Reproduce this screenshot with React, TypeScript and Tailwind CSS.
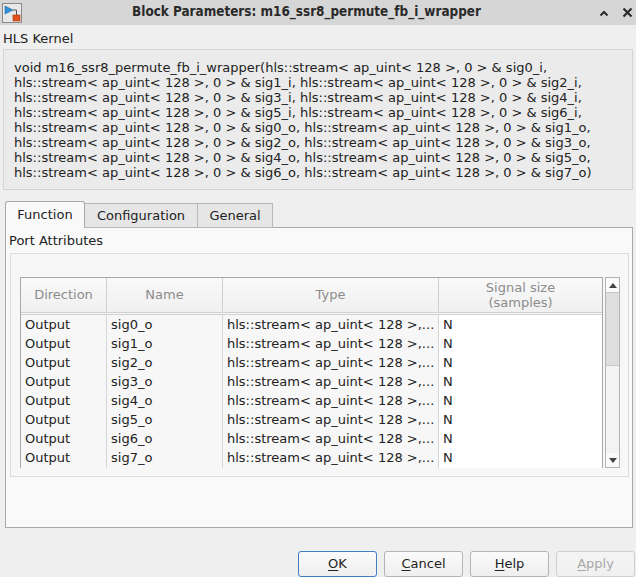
import React from 'react'

const kernelLines = [
  'void m16_ssr8_permute_fb_i_wrapper(hls::stream< ap_uint< 128 >, 0 > & sig0_i,',
  'hls::stream< ap_uint< 128 >, 0 > & sig1_i, hls::stream< ap_uint< 128 >, 0 > & sig2_i,',
  'hls::stream< ap_uint< 128 >, 0 > & sig3_i, hls::stream< ap_uint< 128 >, 0 > & sig4_i,',
  'hls::stream< ap_uint< 128 >, 0 > & sig5_i, hls::stream< ap_uint< 128 >, 0 > & sig6_i,',
  'hls::stream< ap_uint< 128 >, 0 > & sig0_o, hls::stream< ap_uint< 128 >, 0 > & sig1_o,',
  'hls::stream< ap_uint< 128 >, 0 > & sig2_o, hls::stream< ap_uint< 128 >, 0 > & sig3_o,',
  'hls::stream< ap_uint< 128 >, 0 > & sig4_o, hls::stream< ap_uint< 128 >, 0 > & sig5_o,',
  'hls::stream< ap_uint< 128 >, 0 > & sig6_o, hls::stream< ap_uint< 128 >, 0 > & sig7_o)',
]

const ports = ['sig0_o', 'sig1_o', 'sig2_o', 'sig3_o', 'sig4_o', 'sig5_o', 'sig6_o', 'sig7_o']

function BlockIcon() {
  return (
    <svg width="20" height="20" viewBox="0 0 20 20">
      <rect x="0.5" y="0.5" width="19" height="19" fill="#e8e8e8" stroke="#8a8a8a" />
      <path d="M3 3 L11 7 L3 11 Z" fill="#2f8fd8" stroke="#1c6aa8" strokeWidth="0.6" />
      <path d="M11 7 H14.5 V12" fill="none" stroke="#555" strokeWidth="1" />
      <rect x="11" y="12" width="7" height="6" fill="#e0521c" stroke="#a33a10" strokeWidth="0.6" />
    </svg>
  )
}

function Btn({ u, rest, primary, disabled }: { u: string; rest: string; primary?: boolean; disabled?: boolean }) {
  return (
    <div
      className={
        'w-[79px] h-[26px] rounded-[3px] border flex items-center justify-center bg-gradient-to-b ' +
        (disabled
          ? 'text-[#a8a8a8] border-[#cfcfcf] from-[#f4f4f4] to-[#f0f0f0]'
          : 'text-[#222] from-[#fbfbfb] to-[#efefef] ' + (primary ? 'border-[#3d7fc1]' : 'border-[#b4b4b4]'))
      }
    >
      <span className="text-[13px]">
        <span className="underline underline-offset-2">{u}</span>
        {rest}
      </span>
    </div>
  )
}

export default function App() {
  return (
    <div
      className="w-[636px] h-[577px] bg-[#efefef] overflow-hidden flex flex-col text-[13px] text-[#222]"
      style={{ fontFamily: '"DejaVu Sans", sans-serif' }}
    >
      {/* title bar */}
      <div className="h-[25px] bg-[#d6d6d6] flex items-center shrink-0">
        <div className="pl-[2px] flex items-center">
          <BlockIcon />
        </div>
        <div
          className="flex-1 text-center font-bold text-[13.4px] text-[#2a2a2a] pr-[8px]"
          style={{ fontFamily: '"DejaVu Sans Condensed", "DejaVu Sans", sans-serif', fontStretch: 'condensed' }}
        >
          Block Parameters: m16_ssr8_permute_fb_i_wrapper
        </div>
        <div className="flex items-center gap-[13px] pr-[3px]">
          <svg width="10" height="8" viewBox="0 0 10 8">
            <path d="M1.5 6.5 L5 3 L8.5 6.5" fill="none" stroke="#2a2a2a" strokeWidth="2" />
          </svg>
          <svg width="11" height="11" viewBox="0 0 11 11">
            <path d="M1.5 1.5 L9.5 9.5 M9.5 1.5 L1.5 9.5" stroke="#2a2a2a" strokeWidth="2.2" />
          </svg>
        </div>
      </div>

      {/* HLS kernel */}
      <div className="pt-[6px] pl-[3px] leading-[16px] h-[24px] shrink-0">HLS Kernel</div>
      <div className="mx-[3px] h-[141px] shrink-0 border border-[#d4d4d4] bg-[#ebebeb] pt-[10px] pl-[10px] leading-[15px] whitespace-nowrap overflow-hidden">
        {kernelLines.map((l, i) => (
          <div key={i}>{l}</div>
        ))}
      </div>

      {/* tabs */}
      <div className="mt-[11px] ml-[5px] flex items-end h-[27px] shrink-0 relative z-10">
        <div className="w-[80px] h-[27px] border border-b-0 border-[#a8a8a8] rounded-t-[3px] bg-[#f9f9f9] flex items-center justify-center">
          Function
        </div>
        <div className="w-[113px] h-[25px] border border-l-0 border-[#b8b8b8] bg-[#e6e6e6] flex items-center justify-center">
          Configuration
        </div>
        <div className="w-[75px] h-[25px] border border-l-0 border-[#b8b8b8] bg-[#e6e6e6] flex items-center justify-center">
          General
        </div>
      </div>

      {/* tab panel */}
      <div className="-mt-[1px] ml-[5px] mr-[3px] h-[301px] shrink-0 border border-[#a8a8a8] bg-[#f9f9f9] flex flex-col">
        <div className="pt-[5px] pl-[3px] leading-[16px]">Port Attributes</div>
        <div className="mt-[4px] ml-[4px] mr-[3px] h-[224px] border border-[#dcdcdc] bg-[#f7f7f7] pt-[23px] pl-[9px] flex items-start">
          <div className="flex items-start gap-[2px]">
            {/* table */}
            <div className="w-[583px] border border-[#a8a8a8] bg-white">
              <div className="grid grid-cols-[86px_116px_216px_163px] h-[37px] bg-gradient-to-b from-[#f9f9f9] to-[#f0f0f0] border-b-[3px] border-double border-[#d0d0d0] text-[#8c8c8c]">
                <div className="flex items-center justify-center border-r border-[#d0d0d0]">Direction</div>
                <div className="flex items-center justify-center border-r border-[#d0d0d0]">Name</div>
                <div className="flex items-center justify-center border-r border-[#d0d0d0]">Type</div>
                <div className="flex flex-col items-center justify-center leading-[15px]">
                  <span>Signal size</span>
                  <span>(samples)</span>
                </div>
              </div>
              {ports.map((p, i) => (
                <div
                  key={p}
                  className={
                    'grid grid-cols-[86px_116px_216px_163px] h-[19px] ' +
                    (i < ports.length - 1 ? 'border-b border-[#d6d6d6]' : '')
                  }
                >
                  <div className="bg-[#f7f7f7] border-r border-[#d6d6d6] pl-[4px] flex items-center">Output</div>
                  <div className="bg-[#f7f7f7] border-r border-[#d6d6d6] pl-[4px] flex items-center">{p}</div>
                  <div className="bg-[#f7f7f7] border-r border-[#d6d6d6] pl-[4px] flex items-center whitespace-nowrap overflow-hidden">
                    hls::stream&lt; ap_uint&lt; 128 &gt;,...
                  </div>
                  <div className="bg-white pl-[4px] flex items-center">N</div>
                </div>
              ))}
            </div>
            {/* scrollbar */}
            <div className="w-[15px] h-[191px] border border-[#b4b4b4] bg-[#f3f3f3] flex flex-col">
              <div className="h-[14px] flex items-center justify-center bg-[#fafafa]">
                <svg width="8" height="5" viewBox="0 0 8 5">
                  <path d="M0 5 L4 0 L8 5 Z" fill="#444" />
                </svg>
              </div>
              <div className="h-[74px] bg-[#dedede] border-y border-[#c8c8c8]" />
              <div className="flex-1" />
              <div className="h-[14px] flex items-center justify-center bg-[#fafafa]">
                <svg width="8" height="5" viewBox="0 0 8 5">
                  <path d="M0 0 L4 5 L8 0 Z" fill="#444" />
                </svg>
              </div>
            </div>
          </div>
        </div>
      </div>

      {/* buttons */}
      <div className="mt-[23px] pl-[298px] flex gap-[7px]">
        <Btn u="O" rest="K" primary />
        <Btn u="C" rest="ancel" />
        <Btn u="H" rest="elp" />
        <Btn u="A" rest="pply" disabled />
      </div>
    </div>
  )
}
